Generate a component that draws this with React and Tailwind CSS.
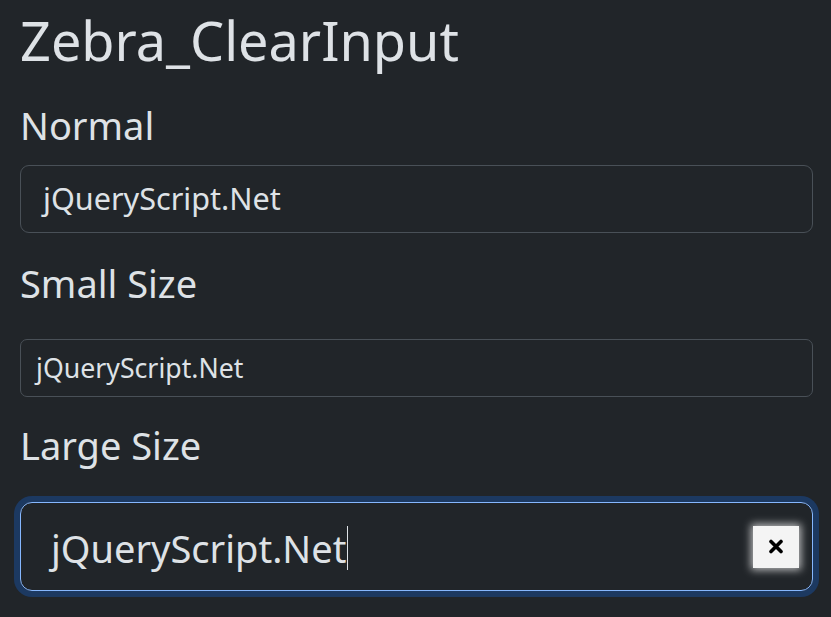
import React from 'react';

const font = { fontFamily: '"Noto Sans", "Open Sans", sans-serif' };

function Label({ children, className }) {
  return <h3 className={`text-[38px] leading-none text-[#dee2e6] ${className}`}>{children}</h3>;
}

function ClearIcon() {
  return (
    <svg width="16" height="15" viewBox="0 0 16 15" fill="none">
      <path d="M3 2.5 L13 12.5 M13 2.5 L3 12.5" stroke="#000" strokeWidth="3.6" strokeLinecap="round" />
    </svg>
  );
}

export default function App() {
  return (
    <div className="min-h-[617px] w-[831px] bg-[#212529] pl-5 pr-[18px] text-[#dee2e6]" style={font}>
      <h1 className="pt-[13px] text-[54px] leading-none font-normal">Zebra_ClearInput</h1>

      <Label className="mt-[39px] mb-[21px]">Normal</Label>
      <div className="flex h-[68px] items-center rounded-[9px] border border-[#495057] pl-[22px] text-[30.6px]">
        jQueryScript.Net
      </div>

      <Label className="mt-[31px] mb-[37px]">Small Size</Label>
      <div className="flex h-[58px] items-center rounded-[7px] border border-[#495057] pl-[15px] text-[26.7px]">
        jQueryScript.Net
      </div>

      <Label className="mt-[29px] mb-[38px]">Large Size</Label>
      <div className="flex h-[89px] items-center justify-between rounded-[12px] border border-[#86b7fe] pl-[30px] pr-[13px] text-[38px] shadow-[0_0_0_6px_rgba(13,110,253,0.27)]">
        <span className="flex items-center pt-[3px]">
          jQueryScript.Net
          <span className="ml-px inline-block h-[44px] w-px bg-[#dee2e6]" />
        </span>
        <button className="flex h-[42px] w-[46px] items-center justify-center bg-[#f4f4f4] shadow-[0_0_8px_2px_rgba(255,255,255,0.7)]">
          <ClearIcon />
        </button>
      </div>
    </div>
  );
}
